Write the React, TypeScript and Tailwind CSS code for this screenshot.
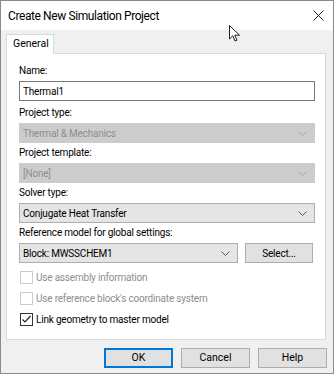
import React from 'react';

const font = { fontFamily: 'Roboto, "Noto Sans", sans-serif' };

function Chevron({ disabled }: { disabled?: boolean }) {
  return (
    <svg width="9" height="5" viewBox="0 0 9 5" className="shrink-0">
      <path
        d="M0.5 0.5 L4.5 4.5 L8.5 0.5"
        fill="none"
        stroke={disabled ? '#a8a8a8' : '#555555'}
        strokeWidth="1"
      />
    </svg>
  );
}

function Select({ value, disabled, className = '' }: { value: string; disabled?: boolean; className?: string }) {
  return (
    <div
      className={`h-[20px] flex items-center justify-between pl-[3px] pr-[7px] border text-[10px] tracking-[-0.2px] ${
        disabled ? 'bg-[#cccccc] border-[#cccccc] text-[#8e8e8e]' : 'bg-[#e5e5e5] border-[#adadad] text-black'
      } ${className}`}
    >
      <span>{value}</span>
      <Chevron disabled={disabled} />
    </div>
  );
}

function Field({ label, children, className = '' }: { label: string; children: React.ReactNode; className?: string }) {
  return (
    <div className={`flex flex-col gap-[2px] ${className}`}>
      <div className="h-[16px] leading-[16px] text-[10px] tracking-[-0.2px] text-black">{label}</div>
      {children}
    </div>
  );
}

function Check({ label, checked, disabled }: { label: string; checked?: boolean; disabled?: boolean }) {
  return (
    <div className="h-[21px] flex items-center gap-[3px] pl-[1px]">
      <div
        className={`w-[13px] h-[13px] border bg-white flex items-center justify-center ${
          disabled ? 'border-[#cccccc]' : 'border-[#333333]'
        }`}
      >
        {checked && (
          <svg width="11" height="11" viewBox="0 0 11 11">
            <path d="M1.5 5.5 L4 8 L9.5 2" fill="none" stroke="#222" strokeWidth="1.2" />
          </svg>
        )}
      </div>
      <span className={`text-[10px] tracking-[-0.2px] ${disabled ? 'text-[#8e8e8e]' : 'text-black'}`}>{label}</span>
    </div>
  );
}

function Button({ label, primary }: { label: string; primary?: boolean }) {
  return (
    <div
      className={`w-[69px] h-[20px] flex items-center justify-center bg-[#e1e1e1] text-[10.5px] text-black ${
        primary ? 'border-2 border-[#0078d7]' : 'border border-[#adadad]'
      }`}
    >
      {label}
    </div>
  );
}

export default function App() {
  return (
    <div className="w-[334px] h-[374px] flex flex-col border border-[#8a8a8a] bg-[#f0f0f0] relative" style={font}>
      {/* Title bar */}
      <div className="h-[29px] bg-white flex items-center justify-between pl-[7px] pr-[9px] shrink-0">
        <span className="text-[12px] tracking-[-0.4px] text-black">Create New Simulation Project</span>
        <svg width="11" height="11" viewBox="0 0 11 11">
          <path d="M0.5 0.5 L10.5 10.5 M10.5 0.5 L0.5 10.5" stroke="#222" strokeWidth="1" />
        </svg>
      </div>

      {/* Body */}
      <div className="flex flex-col px-[5px] pt-[4px]">
        {/* Tab */}
        <div className="flex">
          <div className="w-[48px] h-[20px] bg-white border border-b-0 border-[#d9d9d9] text-[10.5px] pl-[6px] leading-[18px] -mb-px relative z-10">
            General
          </div>
        </div>
        <div className="w-[320px] h-[287px] bg-white border border-[#d9d9d9] flex flex-col pl-[12px] pr-[10px] pt-[9px]">
          <div className="flex flex-col gap-[2px]">
            <Field label="Name:">
              <div className="h-[20px] border border-[#7a7a7a] flex items-center pl-[3px] text-[10px] tracking-[-0.2px] text-black">
                Thermal1
              </div>
            </Field>
            <Field label="Project type:" className="mt-[2px]">
              <Select value="Thermal & Mechanics" disabled />
            </Field>
            <Field label="Project template:">
              <Select value="[None]" disabled />
            </Field>
            <Field label="Solver type:">
              <Select value="Conjugate Heat Transfer" />
            </Field>
            <Field label="Reference model for global settings:">
              <div className="flex gap-[7px]">
                <Select value="Block: MWSSCHEM1" className="w-[219px]" />
                <div className="w-[68px] h-[20px] flex items-center justify-center bg-[#e1e1e1] border border-[#adadad] text-[10px] tracking-[-0.2px] text-black">
                  Select...
                </div>
              </div>
            </Field>
          </div>
          <div className="flex flex-col mt-[4px]">
            <Check label="Use assembly information" disabled />
            <Check label="Use reference block's coordinate system" disabled />
            <Check label="Link geometry to master model" checked />
          </div>
        </div>

        {/* Buttons */}
        <div className="flex justify-end gap-[8px] mt-[8px] pr-[1px]">
          <Button label="OK" primary />
          <Button label="Cancel" />
          <Button label="Help" />
        </div>
      </div>

      {/* Mouse cursor */}
      <svg className="absolute left-[228px] top-[24px]" width="12" height="18" viewBox="0 0 12 18">
        <path d="M0.5 0.5 L0.5 14 L3.8 10.8 L6 16 L8 15.2 L5.8 10.2 L10.5 10.2 Z" fill="white" stroke="#222" strokeWidth="1" />
      </svg>
    </div>
  );
}
